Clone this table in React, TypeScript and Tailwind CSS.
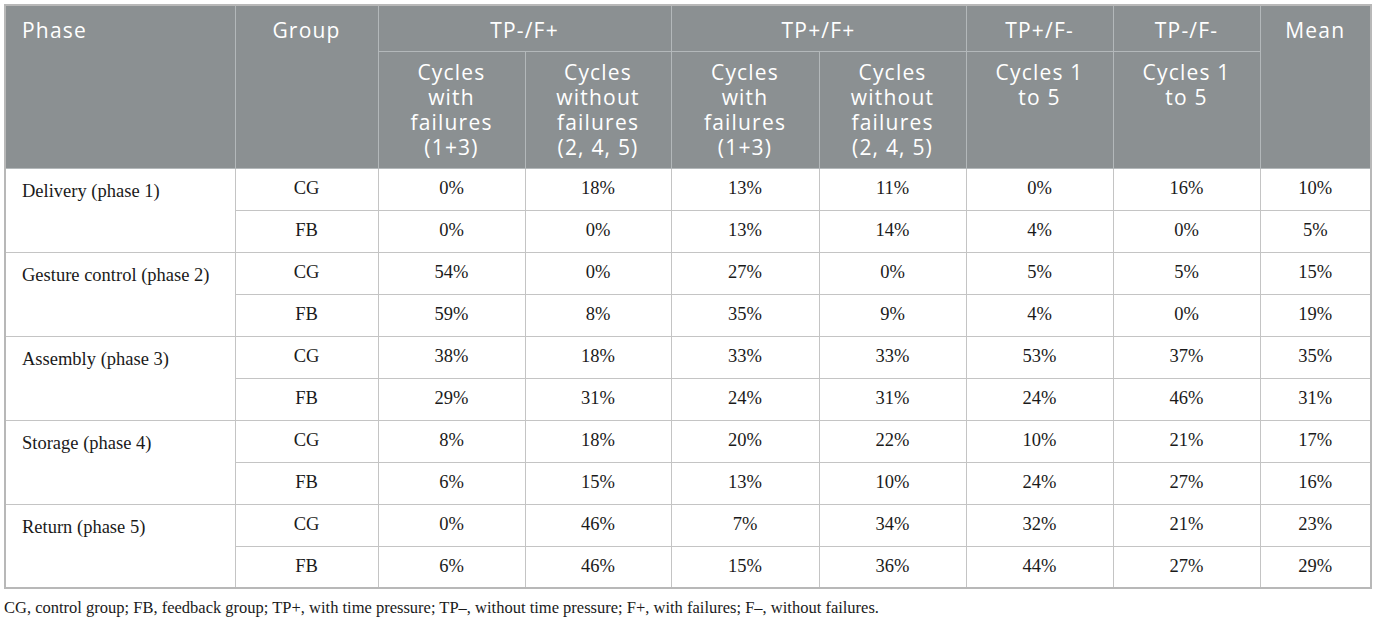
import React from "react";

const rows: { phase: string; cg: string[]; fb: string[] }[] = [
  { phase: "Delivery (phase 1)", cg: ["0%", "18%", "13%", "11%", "0%", "16%", "10%"], fb: ["0%", "0%", "13%", "14%", "4%", "0%", "5%"] },
  { phase: "Gesture control (phase 2)", cg: ["54%", "0%", "27%", "0%", "5%", "5%", "15%"], fb: ["59%", "8%", "35%", "9%", "4%", "0%", "19%"] },
  { phase: "Assembly (phase 3)", cg: ["38%", "18%", "33%", "33%", "53%", "37%", "35%"], fb: ["29%", "31%", "24%", "31%", "24%", "46%", "31%"] },
  { phase: "Storage (phase 4)", cg: ["8%", "18%", "20%", "22%", "10%", "21%", "17%"], fb: ["6%", "15%", "13%", "10%", "24%", "27%", "16%"] },
  { phase: "Return (phase 5)", cg: ["0%", "46%", "7%", "34%", "32%", "21%", "23%"], fb: ["6%", "46%", "15%", "36%", "44%", "27%", "29%"] },
];

const hd = "border border-[#b3b8ba] align-top font-normal text-white";
const bd = "border border-[#c4c4c4] text-center align-middle h-[42px] p-0";

export default function App() {
  return (
    <div className="w-[1375px] h-[624px] bg-white pt-[4px] px-[4px]">
      <table
        className="table-fixed border-collapse w-[1366px] border-2 border-[#b8b8b8]"
        style={{ fontFamily: '"Liberation Serif", serif' }}
      >
        <colgroup>
          <col className="w-[230px]" />
          <col className="w-[143px]" />
          <col className="w-[147px]" />
          <col className="w-[146px]" />
          <col className="w-[148px]" />
          <col className="w-[147px]" />
          <col className="w-[147px]" />
          <col className="w-[147px]" />
          <col className="w-[111px]" />
        </colgroup>
        <thead
          className="bg-[#8b9092] text-[21px] leading-[25px] tracking-[1.2px]"
          style={{ fontFamily: '"Open Sans", sans-serif' }}
        >
          <tr className="h-[46px]">
            <th rowSpan={2} className={`${hd} text-left pl-[16px] pt-[12px]`}>Phase</th>
            <th rowSpan={2} className={`${hd} text-center pt-[12px]`}>Group</th>
            <th colSpan={2} className={`${hd} text-center pt-[12px]`}>TP-/F+</th>
            <th colSpan={2} className={`${hd} text-center pt-[12px]`}>TP+/F+</th>
            <th className={`${hd} text-center pt-[12px]`}>TP+/F-</th>
            <th className={`${hd} text-center pt-[12px]`}>TP-/F-</th>
            <th rowSpan={2} className={`${hd} text-center pt-[12px]`}>Mean</th>
          </tr>
          <tr className="h-[117px]">
            <th className={`${hd} text-center pt-[8px] px-1`}>Cycles<br />with<br />failures<br />(1+3)</th>
            <th className={`${hd} text-center pt-[8px] px-1`}>Cycles<br />without<br />failures<br />(2, 4, 5)</th>
            <th className={`${hd} text-center pt-[8px] px-1`}>Cycles<br />with<br />failures<br />(1+3)</th>
            <th className={`${hd} text-center pt-[8px] px-1`}>Cycles<br />without<br />failures<br />(2, 4, 5)</th>
            <th className={`${hd} text-center pt-[8px] px-1`}>Cycles 1<br />to 5</th>
            <th className={`${hd} text-center pt-[8px] px-1`}>Cycles 1<br />to 5</th>
          </tr>
        </thead>
        <tbody className="text-[18.5px] text-[#1a1a1a]">
          {rows.map((r) => (
            <React.Fragment key={r.phase}>
              <tr>
                <td rowSpan={2} className="border border-[#c4c4c4] align-top text-left pl-[16px] pt-[9px]">
                  {r.phase}
                </td>
                <td className={bd}>CG</td>
                {r.cg.map((v, i) => (
                  <td key={i} className={bd}>{v}</td>
                ))}
              </tr>
              <tr>
                <td className={bd}>FB</td>
                {r.fb.map((v, i) => (
                  <td key={i} className={bd}>{v}</td>
                ))}
              </tr>
            </React.Fragment>
          ))}
        </tbody>
      </table>
      <p
        className="mt-[7px] text-[16.5px] text-[#1a1a1a]"
        style={{ fontFamily: '"Liberation Serif", serif' }}
      >
        CG, control group; FB, feedback group; TP+, with time pressure; TP–, without time pressure; F+, with failures; F–, without failures.
      </p>
    </div>
  );
}
